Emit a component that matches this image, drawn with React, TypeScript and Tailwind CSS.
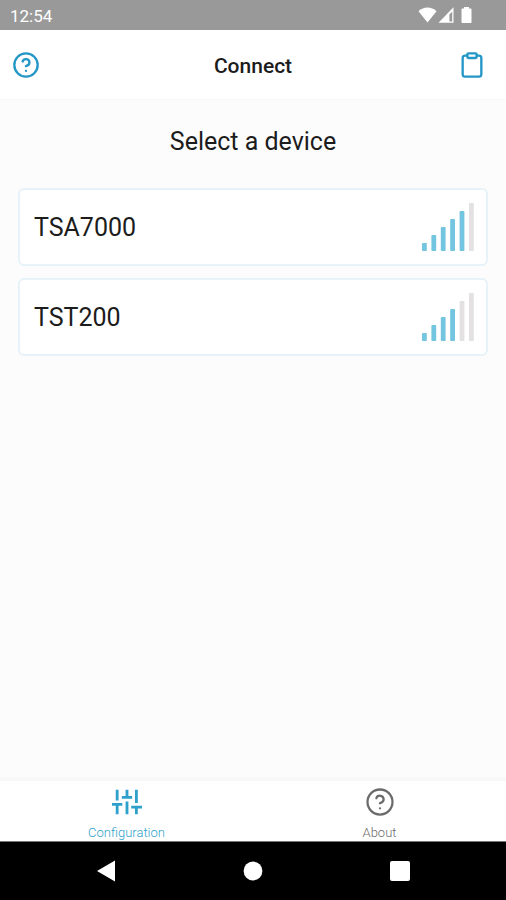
import React, { useState } from 'react';
import { FiClipboard, FiHelpCircle } from 'react-icons/fi';

interface Device {
  name: string;
  signal: number;
}

interface SignalBarsProps {
  level: number;
}

type Tab = 'configuration' | 'about';

const devices: Device[] = [
  { name: 'TSA7000', signal: 5 },
  { name: 'TST200', signal: 4 },
];

const BAR_COUNT = 6;

const SignalBars: React.FC<SignalBarsProps> = ({ level }) => (
  <svg width="52" height="48" viewBox="0 0 52 48" role="img" aria-label={`Signal ${level} of ${BAR_COUNT}`}>
    {Array.from({ length: BAR_COUNT }, (_, i) => (
      <rect
        key={i}
        x={i * 9.4}
        y={40 - i * 8}
        width="4.8"
        height={8 + i * 8}
        rx="0.8"
        className={i < level ? 'fill-[#74c5e0]' : 'fill-[#e3e1e2]'}
      />
    ))}
  </svg>
);

const SlidersIcon: React.FC = () => (
  <svg width="32" height="32" viewBox="0 0 32 32" fill="none" stroke="currentColor" strokeWidth="3" aria-hidden="true">
    <path d="M5.5 3V14.5M0 18.5H11M5.5 18.5V29" />
    <path d="M16 3V11M10.5 11H21.5M16 15.5V29" />
    <path d="M26 3V17M20.5 21.5H32M26 21.5V29" />
  </svg>
);

const StatusBar: React.FC = () => (
  <div className="flex h-[30px] items-center justify-between bg-[#999999] pl-[10px] pr-8 text-white">
    <span className="pt-0.5 text-[17px] leading-5">12:54</span>
    <svg width="56" height="18" viewBox="0 0 56 18" fill="currentColor" aria-hidden="true">
      {/* wifi */}
      <path d="M0.5 5.2C5.5 0.2 13.5 0.2 18.5 5.2L9.5 16.5Z" />
      {/* mobile signal */}
      <path fillRule="evenodd" d="M35.5 1.2V16.8H20.5ZM34.2 5.6L31.4 8.6V15.4H34.2Z" />
      {/* battery */}
      <path d="M46 1H51V2.6H52.7Q53.5 2.6 53.5 3.4V16.2Q53.5 17 52.7 17H44.3Q43.5 17 43.5 16.2V3.4Q43.5 2.6 44.3 2.6H46Z" />
    </svg>
  </div>
);

const NavigationBar: React.FC = () => (
  <div className="flex h-[59px] justify-center border-t border-[#777777] bg-black text-white">
    <button type="button" aria-label="Back" className="flex w-[147px] items-center justify-center">
      <svg width="20" height="22" viewBox="0 0 20 22" fill="currentColor">
        <path d="M19 0.5V21.5L1 11Z" />
      </svg>
    </button>
    <button type="button" aria-label="Home" className="flex w-[147px] items-center justify-center">
      <svg width="20" height="20" viewBox="0 0 20 20" fill="currentColor">
        <circle cx="10" cy="10" r="9.4" />
      </svg>
    </button>
    <button type="button" aria-label="Recent apps" className="flex w-[147px] items-center justify-center">
      <svg width="20" height="20" viewBox="0 0 20 20" fill="currentColor">
        <rect width="20" height="20" rx="2" />
      </svg>
    </button>
  </div>
);

const App: React.FC = () => {
  const [tab, setTab] = useState<Tab>('configuration');

  const tabClass = (name: Tab) =>
    `flex flex-1 flex-col items-center gap-2 pt-1.5 ${tab === name ? 'text-[#2f9fcb]' : 'text-[#6b6b6b]'}`;

  return (
    <div className="flex min-h-screen flex-col bg-[#fcfcfc] font-['Roboto',sans-serif] text-[#1c1c1c]">
      <StatusBar />

      <header className="flex h-[70px] items-center justify-between border-b border-[#f8f8f8] bg-white pl-3 pr-5 text-[#2497c6]">
        <button type="button" aria-label="Help" className="w-9">
          <FiHelpCircle size={28} />
        </button>
        <h1 className="pt-0.5 text-[21px] leading-8 font-medium text-[#1c1c1c]">Connect</h1>
        <button type="button" aria-label="Copy log">
          <FiClipboard size={28} />
        </button>
      </header>

      <main className="flex-1 px-[18px] pt-6">
        <h2 className="text-center text-[25px] leading-9">Select a device</h2>
        <ul className="mt-7 flex flex-col gap-3">
          {devices.map((device) => (
            <li key={device.name}>
              <button
                type="button"
                className="flex h-[78px] w-full items-center justify-between rounded-md border-2 border-[#e7f3f8] bg-white pl-[14px] pr-3 text-left text-[25px]"
              >
                <span className="pt-0.5">{device.name}</span>
                <SignalBars level={device.signal} />
              </button>
            </li>
          ))}
        </ul>
      </main>

      <nav className="flex h-16 border-t-4 border-[#f8f8f8] bg-white text-[13px] leading-4 font-light">
        <button type="button" className={tabClass('configuration')} onClick={() => setTab('configuration')}>
          <SlidersIcon />
          <span>Configuration</span>
        </button>
        <button type="button" className={tabClass('about')} onClick={() => setTab('about')}>
          <FiHelpCircle size={32} strokeWidth={1.8} />
          <span>About</span>
        </button>
      </nav>

      <NavigationBar />
    </div>
  );
};

export default App;
